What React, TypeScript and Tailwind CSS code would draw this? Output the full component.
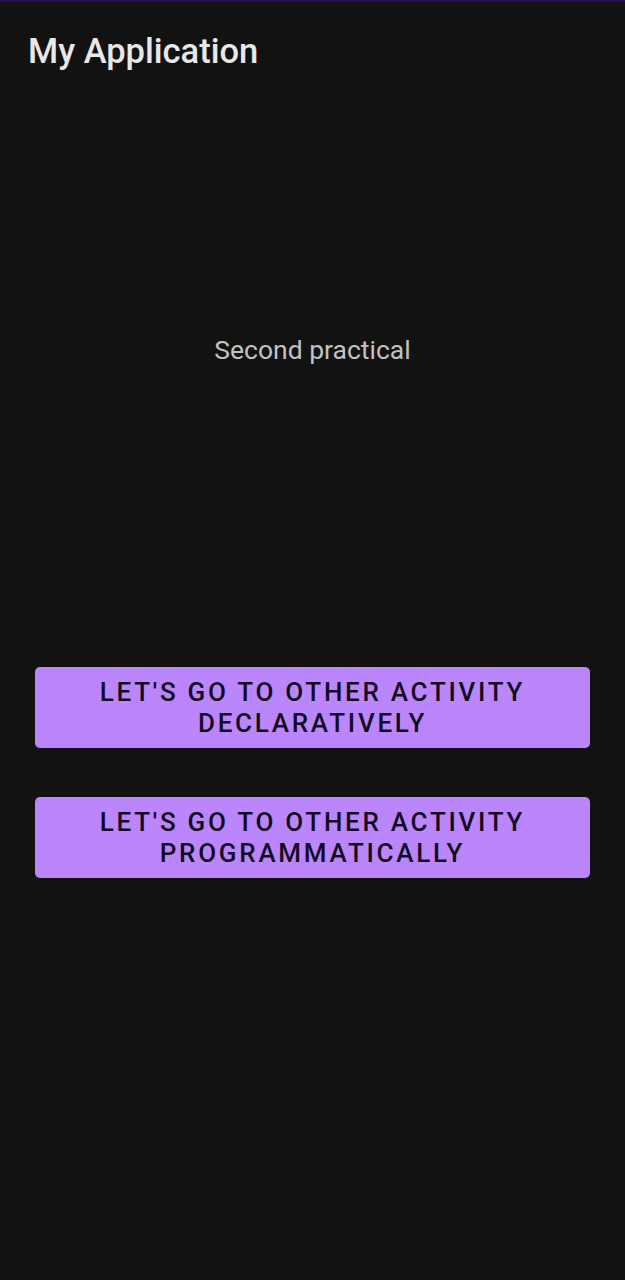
export default function App() {
  return (
    <div className="min-h-[1280px] w-[625px] bg-[#121212] font-['Roboto',sans-serif] flex flex-col">
      {/* Status strip */}
      <div className="h-[2px] bg-[#2a0e55]" />

      {/* App bar */}
      <div className="h-[96px] px-[28px] pt-[27px]">
        <h1 className="text-[34.5px] leading-[44px] font-medium text-[#e8e8e8]">My Application</h1>
      </div>

      {/* Label */}
      <div className="mt-[233px] text-center text-[26.5px] leading-[38px] text-[#c2c2c2]">
        Second practical
      </div>

      {/* Buttons */}
      <div className="mt-[298px] px-[35px] flex flex-col gap-[49px]">
        <button className="h-[81px] rounded-[5px] bg-[#bb86fc] text-[#12081e] text-[26px] leading-[31px] font-medium tracking-[0.105em] uppercase">
          Let's go to other activity
          <br />
          declaratively
        </button>
        <button className="h-[81px] rounded-[5px] bg-[#bb86fc] text-[#12081e] text-[26px] leading-[31px] font-medium tracking-[0.105em] uppercase">
          Let's go to other activity
          <br />
          programmatically
        </button>
      </div>
    </div>
  );
}
